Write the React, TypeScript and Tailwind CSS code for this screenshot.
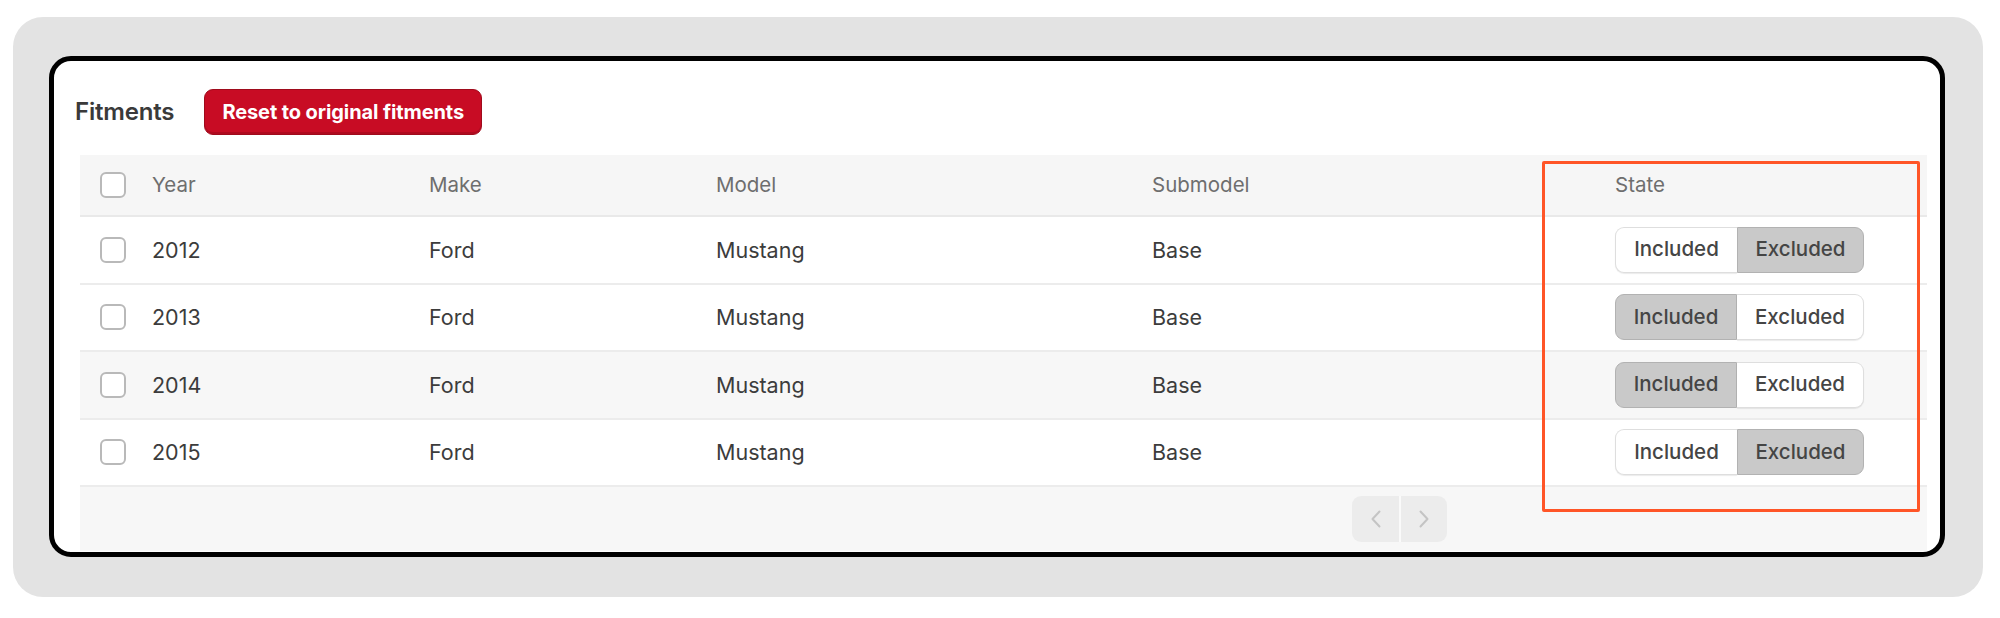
import React from "react";

type Row = { year: string; make: string; model: string; sub: string; included: boolean; shaded?: boolean };

const rows: Row[] = [
  { year: "2012", make: "Ford", model: "Mustang", sub: "Base", included: false },
  { year: "2013", make: "Ford", model: "Mustang", sub: "Base", included: true },
  { year: "2014", make: "Ford", model: "Mustang", sub: "Base", included: true, shaded: true },
  { year: "2015", make: "Ford", model: "Mustang", sub: "Base", included: false },
];

function Checkbox() {
  return <div className="w-[26px] h-[26px] rounded-[6px] border-2 border-[#b9b9b9] bg-white" />;
}

function Toggle({ included }: { included: boolean }) {
  const on = "bg-[#c9c9c9] border-[#b2b2b2]";
  const off = "bg-white border-[#dedede] shadow-[0_1px_1px_rgba(0,0,0,0.08)]";
  return (
    <div className="flex h-[46px] w-[249px]">
      <div
        className={`w-[122px] h-full flex items-center justify-center rounded-l-[9px] border text-[20.5px] font-medium text-[#454545] ${included ? on : off} ${included ? "border-r" : "border-r-0"}`}
      >
        Included
      </div>
      <div
        className={`flex-1 h-full flex items-center justify-center rounded-r-[9px] border text-[20.5px] font-medium text-[#454545] ${included ? off : on} ${included ? "border-l-0" : "border-l"}`}
      >
        Excluded
      </div>
    </div>
  );
}

export default function App() {
  return (
    <div className="min-h-screen bg-white pt-[17px] pl-[13px] font-['Inter','Liberation_Sans',sans-serif]">
      <div className="w-[1970px] h-[580px] rounded-[30px] bg-[#e3e3e3] pt-[39px] pl-[36px]">
        <div className="relative w-[1896px] h-[501px] rounded-[22px] border-[5px] border-black bg-white overflow-hidden">
          {/* Title row */}
          <div className="flex items-center gap-[30px] pl-[21px] pt-[28px]">
            <span className="text-[24px] font-semibold text-[#3a3a3a] tracking-[-0.2px]">Fitments</span>
            <button className="h-[46px] w-[278px] rounded-[9px] bg-[#c80c24] border border-[#9f0b1c] shadow-[inset_0_-2px_0_rgba(0,0,0,0.12)] text-white text-[20px] font-bold tracking-[-0.1px]">
              Reset to original fitments
            </button>
          </div>

          {/* Table */}
          <div className="ml-[26px] mt-[20px] w-[1847px]">
            <div className="flex items-center h-[62px] bg-[#f6f6f6] border-b-2 border-[#e9e9e9] text-[20.5px] text-[#6e6e6e]">
              <div className="w-[72px] pl-[20px] flex items-center">
                <Checkbox />
              </div>
              <div className="w-[277px]">Year</div>
              <div className="w-[287px]">Make</div>
              <div className="w-[436px]">Model</div>
              <div className="w-[463px]">Submodel</div>
              <div className="flex-1">State</div>
            </div>
            {rows.map((r) => (
              <div
                key={r.year}
                className={`flex items-center h-[67.5px] border-b-2 border-[#ececec] text-[21.5px] text-[#3c3c3c] ${r.shaded ? "bg-[#f7f7f7]" : "bg-white"}`}
              >
                <div className="w-[72px] pl-[20px] flex items-center">
                  <Checkbox />
                </div>
                <div className="w-[277px]">{r.year}</div>
                <div className="w-[287px]">{r.make}</div>
                <div className="w-[436px]">{r.model}</div>
                <div className="w-[463px]">{r.sub}</div>
                <div className="flex-1">
                  <Toggle included={r.included} />
                </div>
              </div>
            ))}
            <div className="h-[64px] bg-[#f7f7f7] flex items-center pl-[1272px]">
              <div className="flex h-[46px]">
                <div className="w-[47px] h-full rounded-l-[9px] bg-[#ececec] flex items-center justify-center">
                  <svg width="12" height="18" viewBox="0 0 12 18" fill="none">
                    <polyline points="9.5,1.5 2.5,9 9.5,16.5" stroke="#c4c4c4" strokeWidth="2" strokeLinecap="round" strokeLinejoin="round" />
                  </svg>
                </div>
                <div className="w-[48px] h-full rounded-r-[9px] bg-[#ececec] border-l-2 border-[#fafafa] flex items-center justify-center">
                  <svg width="12" height="18" viewBox="0 0 12 18" fill="none">
                    <polyline points="2.5,1.5 9.5,9 2.5,16.5" stroke="#c4c4c4" strokeWidth="2" strokeLinecap="round" strokeLinejoin="round" />
                  </svg>
                </div>
              </div>
            </div>
          </div>

          {/* Annotation highlight */}
          <div className="absolute left-[1488px] top-[100px] w-[378px] h-[351px] border-[3px] border-[#ff5527] rounded-[2px] pointer-events-none" />
        </div>
      </div>
    </div>
  );
}
